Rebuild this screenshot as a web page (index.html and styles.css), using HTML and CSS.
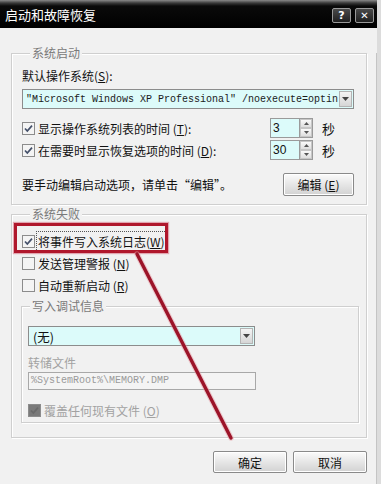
FILE: index.html
```html
<!DOCTYPE html>
<html lang="zh-CN">
<head>
<meta charset="utf-8">
<title>启动和故障恢复</title>
<link rel="stylesheet" href="styles.css">
</head>
<body>
<div class="window">
  <div class="titlebar">
    <span class="title">启动和故障恢复</span>
    <div class="tbtns">
      <span class="tbtn">?</span>
      <span class="tbtn x">✕</span>
    </div>
  </div>
  <div class="content">
    <div class="group g1">
      <div class="legend">系统启动</div>
      <div class="row lbl">默认操作系统(<u>S</u>):</div>
      <div class="combo wide">
        <span class="combo-text mono">"Microsoft Windows XP Professional" /noexecute=optin</span>
        <span class="arrow"><svg width="7" height="4" viewBox="0 0 7 4"><path d="M0 0H7L3.5 4Z" fill="#444"/></svg></span>
      </div>
      <div class="spinrow first">
        <label class="chk"><svg class="box" width="13" height="13" viewBox="0 0 13 13"><rect x="0.5" y="0.5" width="12" height="12" fill="#f4f4f4" stroke="#8c8c8c"/><path d="M3 6.5L5.3 9L10 3.6" fill="none" stroke="#44506a" stroke-width="1.7"/></svg>显示操作系统列表的时间 (<u>T</u>):</label>
        <div class="spin"><span class="spin-in">3</span><span class="spin-btns"><i><svg width="5" height="3" viewBox="0 0 5 3"><path d="M0 3H5L2.5 0Z" fill="#555"/></svg></i><i><svg width="5" height="3" viewBox="0 0 5 3"><path d="M0 0H5L2.5 3Z" fill="#555"/></svg></i></span></div>
        <span class="sec">秒</span>
      </div>
      <div class="spinrow">
        <label class="chk"><svg class="box" width="13" height="13" viewBox="0 0 13 13"><rect x="0.5" y="0.5" width="12" height="12" fill="#f4f4f4" stroke="#8c8c8c"/><path d="M3 6.5L5.3 9L10 3.6" fill="none" stroke="#44506a" stroke-width="1.7"/></svg>在需要时显示恢复选项的时间 (<u>D</u>):</label>
        <div class="spin"><span class="spin-in">30</span><span class="spin-btns"><i><svg width="5" height="3" viewBox="0 0 5 3"><path d="M0 3H5L2.5 0Z" fill="#555"/></svg></i><i><svg width="5" height="3" viewBox="0 0 5 3"><path d="M0 0H5L2.5 3Z" fill="#555"/></svg></i></span></div>
        <span class="sec">秒</span>
      </div>
      <div class="editrow">
        <span>要手动编辑启动选项，请单击“编辑”。</span>
        <span class="btn edit">编辑 (<u>E</u>)</span>
      </div>
    </div>

    <div class="group g2">
      <div class="legend">系统失败</div>
      <div class="chkrow first"><label class="chk"><svg class="box" width="13" height="13" viewBox="0 0 13 13"><rect x="0.5" y="0.5" width="12" height="12" fill="#f4f4f4" stroke="#8c8c8c"/><path d="M3 6.5L5.3 9L10 3.6" fill="none" stroke="#44506a" stroke-width="1.7"/></svg><span class="focus">将事件写入系统日志(<u>W</u>)</span></label></div>
      <div class="chkrow"><label class="chk"><svg class="box" width="13" height="13" viewBox="0 0 13 13"><rect x="0.5" y="0.5" width="12" height="12" fill="#f4f4f4" stroke="#8c8c8c"/></svg>发送管理警报 (<u>N</u>)</label></div>
      <div class="chkrow"><label class="chk"><svg class="box" width="13" height="13" viewBox="0 0 13 13"><rect x="0.5" y="0.5" width="12" height="12" fill="#f4f4f4" stroke="#8c8c8c"/></svg>自动重新启动 (<u>R</u>)</label></div>

      <div class="group inner">
        <div class="legend">写入调试信息</div>
        <div class="combo small">
          <span class="combo-text">(无)</span>
          <span class="arrow"><svg width="7" height="4" viewBox="0 0 7 4"><path d="M0 0H7L3.5 4Z" fill="#444"/></svg></span>
        </div>
        <div class="row lbl dis dump">转储文件</div>
        <div class="textbox mono">%SystemRoot%\MEMORY.DMP</div>
        <div class="chkrow last dis"><label class="chk"><svg class="box" width="13" height="13" viewBox="0 0 13 13"><rect x="0.5" y="0.5" width="12" height="12" fill="#7a7a7a" stroke="#8c8c8c"/><path d="M3 6.5L5.3 9L10 3.6" fill="none" stroke="#6a6a6a" stroke-width="1.7"/></svg>覆盖任何现有文件 (<u>O</u>)</label></div>
      </div>
    </div>

    <div class="buttons">
      <span class="btn ok">确定</span>
      <span class="btn">取消</span>
    </div>
  </div>

  <div class="redbox"></div>
  <svg class="arrowline" width="381" height="484" viewBox="0 0 381 484">
    <line x1="137" y1="254" x2="231" y2="438" stroke="#e8a0a8" stroke-width="5.5" stroke-linecap="round" opacity="0.5"/>
    <line x1="137" y1="254" x2="231" y2="438" stroke="#9c1429" stroke-width="3.4" stroke-linecap="round"/>
  </svg>
</div>
</body>
</html>
```

FILE: styles.css
```css
* { box-sizing: border-box; }
html, body { margin: 0; padding: 0; }
body { background: #f0f0f0; }

.window {
  position: relative;
  width: 381px;
  height: 484px;
  overflow: hidden;
  background: #f1f1f1;
  font-family: "Noto Sans CJK SC", "Noto Sans", sans-serif;
  font-size: 12px;
  color: #111;
  border-right: 4px solid #dcdcdc;
}

.titlebar {
  height: 28px;
  display: flex;
  align-items: center;
  padding-left: 5px;
  background: linear-gradient(#8a8a8a 0px, #3a3a3a 3px, #0a0a0a 6px, #000 100%);
  color: #fff;
}
.title { font-size: 13px; margin-top: 1px; }
.tbtns { margin-left: auto; display: flex; gap: 4px; padding-right: 3px; margin-top: 2px; }
.tbtn {
  width: 19px; height: 15px;
  border: 1px solid #9a9a9a;
  border-radius: 2px;
  background: linear-gradient(#4a4a4a, #202020);
  color: #fff;
  font-family: "DejaVu Sans", sans-serif;
  font-weight: bold;
  font-size: 11px;
  line-height: 13px;
  text-align: center;
}
.tbtn.x { font-size: 10px; }

.content {
  padding-left: 11px;
  border-right: 1px solid #c4c4c4;
  width: 377px;
  height: 456px;
}

.group {
  border: 1px solid #cfcfcf;
  box-shadow: inset 1px 1px 0 #fff, 1px 1px 0 #fff;
  width: 356px;
  display: flex;
  flex-direction: column;
  align-items: flex-start;
}
.legend {
  height: 16px;
  line-height: 16px;
  margin-top: -9px;
  margin-left: 8px;
  padding: 0 2px;
  background: #f1f1f1;
  color: #7a7a7a;
  font-size: 12px;
}

.g1 { margin-top: 25px; padding: 0 0 8px 10px; }
.g2 { margin-top: 9px; padding: 0 0 14px 10px; }
.inner { width: 338px; margin-left: -1px; margin-top: 10px; padding: 0 0 2px 6px; }
.inner .legend { margin-left: 2px; }

.row { height: 16px; line-height: 16px; }
.g1 .lbl { margin-top: 7px; }

.mono { font-family: "Liberation Mono", "DejaVu Sans Mono", monospace; }

.combo {
  height: 20px;
  border: 1px solid #8c8c8c;
  background: #dcfbfa;
  display: flex;
  align-items: center;
  padding: 0 1px 0 3px;
}
.combo.wide { width: 332px; margin-top: 5px; }
.combo.small { width: 227px; margin-top: 12px; }
.combo-text { flex: 1; white-space: nowrap; }
.combo.wide .combo-text { font-size: 10px; color: #1a1a1a; }
.combo.small .combo-text { font-size: 12.5px; padding-left: 1px; }
.arrow {
  width: 13px; height: 16px;
  flex: none;
  border: 1px solid #b4b4b4;
  background: linear-gradient(#f4f4f4, #d6d6d6);
  display: flex; align-items: center; justify-content: center;
}

.spinrow {
  height: 20px;
  margin-top: 2px;
  display: grid;
  grid-template-columns: 248px 43px 24px;
  align-items: center;
}
.spinrow.first { margin-top: 9px; }
.chk { display: flex; align-items: center; white-space: nowrap; }
.chk .box { margin-right: 3px; flex: none; }
.spin { display: flex; height: 20px; }
.spin-in {
  width: 29px;
  border: 1px solid #9a9a9a;
  border-right: none;
  background: #dcfbfa;
  font-family: "Liberation Sans", sans-serif;
  font-size: 12px;
  line-height: 18px;
  padding-left: 2px;
}
.spin-btns {
  width: 14px;
  display: flex; flex-direction: column;
  border: 1px solid #9a9a9a;
  background: #e8e8e8;
}
.spin-btns i {
  flex: 1;
  display: flex; align-items: center; justify-content: center;
  border: 1px solid #c6c6c6;
  background: linear-gradient(#fafafa, #dedede);
}
.sec { font-size: 13px; margin-left: 9px; }

.editrow {
  width: 332px;
  margin-top: 13px;
  height: 23px;
  display: flex;
  align-items: center;
  justify-content: space-between;
}
.btn {
  height: 23px;
  border: 1px solid #8a8a8a;
  border-radius: 2px;
  background: linear-gradient(#fbfbfb, #e6e6e6 50%, #d2d2d2);
  box-shadow: inset 0 0 0 1px #fff;
  display: flex; align-items: center; justify-content: center;
  font-size: 12px;
}
.btn.edit { width: 71px; }

.chkrow { height: 22px; display: flex; align-items: center; }
.chkrow.first { margin-top: 8px; }
.focus { outline: 1px dotted #555; outline-offset: 1px; }
.chkrow.last { margin-top: 10px; height: 20px; }

.dis { color: #a2a2a2; }
.dump { margin-top: 9px; }
.textbox {
  width: 228px;
  height: 18px;
  margin-top: 1px;
  border: 1px solid #a8a8a8;
  background: #f4f4f4;
  color: #9a9a9a;
  font-size: 10px;
  line-height: 16px;
  padding-left: 2px;
}

.buttons {
  margin-top: 13px;
  width: 356px;
  display: flex;
  justify-content: flex-end;
  gap: 6px;
}
.buttons .btn { width: 74px; height: 22px; }

.redbox {
  position: absolute;
  left: 14px; top: 223px;
  width: 154px; height: 30px;
  border: 3px solid #b0172c;
  box-shadow: 0 0 1px 1px rgba(210, 90, 110, 0.5);
}
.arrowline { position: absolute; left: 0; top: 0; pointer-events: none; }
```
